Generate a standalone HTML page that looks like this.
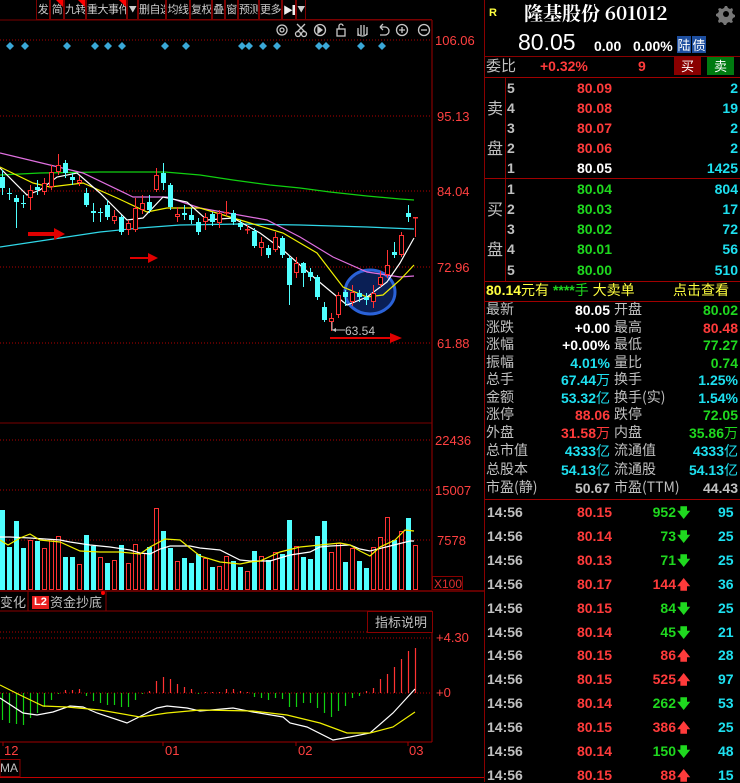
<!DOCTYPE html>
<html><head><meta charset="utf-8">
<style>
*{margin:0;padding:0;box-sizing:border-box}
body{width:740px;height:782px;background:#000;overflow:hidden;position:relative;font-family:"Liberation Sans","Noto Sans CJK SC",sans-serif;}
.a{position:absolute;white-space:nowrap;line-height:1}
.tb{position:absolute;top:0;height:20px;border:1px solid #7a0000;border-top:none;color:#ccc;font-size:11px;line-height:19px;text-align:center;font-family:"Noto Sans CJK SC",sans-serif;white-space:nowrap;overflow:hidden;letter-spacing:-0.5px}
.tri{position:absolute;top:0;right:0;width:0;height:0;border-top:7px solid #f00;border-left:7px solid transparent}
.cn{font-family:"Noto Sans CJK SC",sans-serif;color:#c0c0c0;font-size:14px}
.n{font-weight:bold;font-size:14px;font-family:"Liberation Sans",sans-serif}
.r{color:#ff3b3b}.g{color:#1fd81f}.c{color:#1ee0f0}.w{color:#fff}.y{color:#ffff40}.gy{color:#c0c0c0}
.hl{position:absolute;left:485px;width:255px;height:1px;background:#8a0000}
</style></head><body>
<svg id="ch" width="740" height="782" style="position:absolute;left:0;top:0">
<line x1="432" y1="20" x2="432" y2="590" stroke="#a00000"/>
<line x1="484.5" y1="0" x2="484.5" y2="782" stroke="#8a0000"/>
<line x1="0" y1="20" x2="432" y2="20" stroke="#7a0000"/>
<g stroke="#b00000" stroke-dasharray="1,2">
<line x1="0" y1="40" x2="432" y2="40"/><line x1="0" y1="116" x2="432" y2="116"/><line x1="0" y1="191" x2="432" y2="191"/><line x1="0" y1="267" x2="432" y2="267"/><line x1="0" y1="343" x2="432" y2="343"/>
<line x1="0" y1="440" x2="432" y2="440"/><line x1="0" y1="490" x2="432" y2="490"/><line x1="0" y1="540" x2="432" y2="540"/>
<line x1="0" y1="632" x2="432" y2="632"/><line x1="0" y1="638" x2="432" y2="638"/><line x1="0" y1="693" x2="432" y2="693"/>
</g>
<line x1="0" y1="423" x2="432" y2="423" stroke="#7a0000"/>
<g fill="#ff4040" font-size="13" font-family="Liberation Sans">
<text x="435" y="45">106.06</text><text x="437" y="121">95.13</text><text x="437" y="196">84.04</text><text x="437" y="272">72.96</text><text x="437" y="348">61.88</text>
<text x="435" y="445">22436</text><text x="435" y="495">15007</text><text x="437" y="545">7578</text>
<text x="436" y="642">+4.30</text><text x="436" y="697">+0</text>
<text x="4" y="755">12</text><text x="165" y="755">01</text><text x="298" y="755">02</text><text x="409" y="755">03</text>
</g>
<rect x="432.5" y="576.5" width="30" height="13" fill="none" stroke="#8a0000"/>
<text x="434" y="588" fill="#e03030" font-size="12" font-family="Liberation Sans">X100</text>
<ellipse cx="370" cy="292" rx="25" ry="22" fill="#0a1f55" stroke="#2a62d8" stroke-width="3"/>
<g id="ma"></g>
<g id="cd"></g>
<g id="vb"></g>
<g id="mc"></g>
<g fill="#e00000" stroke="none">
<path d="M28 232h26v-4l11 6-11 6v-4h-26z"/>
<path d="M130 257h18v-4l10 5-10 5v-4h-18z"/>
<path d="M330 337h60v-4l12 5-12 5v-4h-60z"/>
</g>
<line x1="332" y1="330" x2="345" y2="330" stroke="#c0c0c0"/>
<path d="M332 330l4-2v4z" fill="#c0c0c0"/>
<line x1="332" y1="322" x2="332" y2="330" stroke="#c0c0c0"/>
<text x="345" y="335" fill="#c0c0c0" font-size="12" font-family="Liberation Sans">63.54</text>
<line x1="0" y1="591" x2="484" y2="591" stroke="#c00000"/>
<line x1="0" y1="611" x2="432" y2="611" stroke="#8a0000"/>
<line x1="28" y1="591" x2="28" y2="611" stroke="#8a0000"/>
<line x1="106" y1="591" x2="106" y2="611" stroke="#8a0000"/>
<line x1="432" y1="611" x2="432" y2="742" stroke="#a00000"/>
<line x1="0" y1="742" x2="432" y2="742" stroke="#a00000"/>
<g stroke="#a00000"><line x1="3" y1="742" x2="3" y2="746"/><line x1="163" y1="742" x2="163" y2="746"/><line x1="296" y1="742" x2="296" y2="746"/><line x1="408" y1="742" x2="408" y2="746"/></g>
<rect x="367.5" y="611.5" width="65" height="21" fill="#000" stroke="#8a0000"/>
<rect x="0" y="759.5" width="20" height="17" fill="none" stroke="#8a0000"/>
<line x1="0" y1="777.5" x2="484" y2="777.5" stroke="#c00000"/>
<g fill="#3aa8d8" id="dm"></g>
<g fill="none" stroke="#c8c8c8" stroke-width="1.3">
<circle cx="282" cy="30" r="5"/><circle cx="282" cy="30" r="2"/>
<circle cx="298" cy="34" r="2.5"/><circle cx="304" cy="34" r="2.5"/><path d="M297 24l8 8M305 24l-8 8"/>
<circle cx="320" cy="30" r="5.5"/><path d="M318 27v6l4-3z" fill="#c8c8c8"/>
<rect x="337" y="29" width="8" height="7"/><path d="M339 29v-3a2 2 0 0 1 4 0"/>
<path d="M358 36v-8M361 35v-10M364 35v-10M367 35v-8M358 33c0 4 9 4 9 0"/>
<path d="M380 27h5a4 4 0 0 1 0 8h-5M380 27l3-3M380 27l3 3"/>
<circle cx="402" cy="30" r="5.5"/><path d="M399 30h6M402 27v6"/>
<circle cx="424" cy="30" r="5.5"/><path d="M421 30h6"/>
</g>
<path d="M726 6l2 0 1 2 2 1 2-1 1 2-1 2 1 2 2 1v2l-2 1-1 2 1 2-2 1-2-1-2 1-1 2h-2l-1-2-2-1-2 1-1-2 1-2-1-2-2-1v-2l2-1 1-2-1-2 2-1 2 1 2-1z" fill="#777" transform="translate(-1,0)"/>
<circle cx="726" cy="14" r="3" fill="#000"/>
</svg>

<div class="tb" style="left:36px;width:14px">发</div>
<div class="tb" style="left:50px;width:14px">简<div class="tri"></div></div>
<div class="tb" style="left:64px;width:22px">九转<div class="tri"></div></div>
<div class="tb" style="left:86px;width:41px">重大事件<div class="tri"></div></div>
<div class="tb" style="left:127px;width:11px;font-size:8px">▼</div>
<div class="tb" style="left:138px;width:28px">删自选</div>
<div class="tb" style="left:166px;width:24px">均线</div>
<div class="tb" style="left:190px;width:22px">复权</div>
<div class="tb" style="left:212px;width:13px">叠</div>
<div class="tb" style="left:225px;width:13px">窗</div>
<div class="tb" style="left:238px;width:21px">预测</div>
<div class="tb" style="left:259px;width:23px">更多</div>
<div class="tb" style="left:282px;width:14px;color:#eee;font-size:10px">▶▌</div>
<div class="tb" style="left:296px;width:10px;font-size:8px">▼</div>
<div class="tb" style="left:306px;width:126px;border:none;border-bottom:1px solid #7a0000"></div>

<div class="a cn" style="left:0;top:595px;font-size:13px">变化</div>
<div class="a" style="left:32px;top:596px;background:#e82020;color:#fff;font-size:11px;padding:1px 2px;font-weight:bold">L2</div>
<div class="a cn" style="left:50px;top:595px;font-size:13px">资金抄底</div>
<div class="a" style="left:101px;top:591px;width:4px;height:4px;border-radius:2px;background:#f00"></div>
<div class="a cn" style="left:375px;top:615px;font-size:13px">指标说明</div>
<div class="a" style="left:0;top:762px;color:#c0c0c0;font-size:12px">MA</div>

<div class="a" style="left:489px;top:8px;color:#ffff40;font-size:11px;font-weight:bold">R</div>
<div class="a" style="left:524px;top:3px;color:#fff;font-size:19px;font-weight:bold;font-family:'Noto Serif CJK SC','Liberation Serif',serif">隆基股份 601012</div>
<div class="a" style="left:518px;top:31px;color:#fff;font-size:23px;font-family:'Liberation Sans'">80.05</div>
<div class="a n w" style="left:594px;top:39px">0.00</div>
<div class="a n w" style="left:633px;top:39px">0.00%</div>
<div class="a" style="left:677px;top:36px;width:14px;height:17px;background:#1e4fa0;color:#fff;font-size:13px;text-align:center;line-height:17px;font-family:'Noto Sans CJK SC'">陆</div>
<div class="a" style="left:692px;top:36px;width:14px;height:17px;background:#1e4fa0;color:#fff;font-size:13px;text-align:center;line-height:17px;font-family:'Noto Sans CJK SC'">债</div>
<div class="hl" style="top:56px"></div>
<div class="a cn" style="left:486px;top:58px;font-size:15px">委比</div>
<div class="a n r" style="left:540px;top:59px">+0.32%</div>
<div class="a n r" style="left:638px;top:59px">9</div>
<div class="a" style="left:674px;top:57px;width:27px;height:18px;background:#8a0000;color:#fff;font-size:13px;text-align:center;line-height:18px;font-family:'Noto Sans CJK SC'">买</div>
<div class="a" style="left:707px;top:57px;width:27px;height:18px;background:#007a10;color:#fff;font-size:13px;text-align:center;line-height:18px;font-family:'Noto Sans CJK SC'">卖</div>
<div class="hl" style="top:77px;background:#a00000"></div>
<div class="a" style="left:505px;top:78px;width:1px;height:203px;background:#8a0000"></div>
<div class="hl" style="top:178px;background:#a00000"></div>
<div class="hl" style="top:281px;background:#a00000"></div>
<div class="a cn" style="left:487px;top:99px;font-size:16px">卖</div>
<div class="a cn" style="left:487px;top:139px;font-size:16px">盘</div>
<div class="a cn" style="left:487px;top:200px;font-size:16px">买</div>
<div class="a cn" style="left:487px;top:240px;font-size:16px">盘</div>
<div class="a" style="left:486px;top:283px;font-size:14px;color:#ffff40"><b>80.14</b><span style="font-family:'Noto Sans CJK SC'">元有</span> <b class="g">****</b><span class="g" style="font-family:'Noto Sans CJK SC'">手</span> <span style="font-family:'Noto Sans CJK SC'">大卖单</span></div>
<div class="a" style="left:673px;top:283px;font-size:14px;color:#ffff40;font-family:'Noto Sans CJK SC'">点击查看</div>
<div class="hl" style="top:301px;background:#a00000"></div>
<div class="hl" style="top:499px;background:#a00000"></div>

<script>
var NS="http://www.w3.org/2000/svg";
function el(p,t,a){var e=document.createElementNS(NS,t);for(var k in a)e.setAttribute(k,a[k]);p.appendChild(e);return e}
function pl(g,pts,col){el(g,"polyline",{points:pts,fill:"none",stroke:col,"stroke-width":1.2})}
var ma=document.getElementById("ma");
pl(ma,"0,175 40,173 100,172 165,172 200,175 233,180 270,185 300,188 330,192 367,196 400,199 414,200","#10d010");
pl(ma,"0,247 60,238 100,232 140,228 180,225 240,224 300,225 367,227 414,229","#30d8e8");
pl(ma,"0,153 50,165 83,173 133,197 167,197 200,208 267,220 300,237 333,257 367,272 400,277 414,276","#e070e0");
pl(ma,"0,167 33,183 50,187 83,183 117,198 147,212 167,208 200,208 250,223 283,233 317,253 343,287 367,297 383,295 400,280 414,265","#f0f000");
pl(ma,"0,168 27,195 40,190 57,177 77,173 100,193 127,220 143,218 163,197 187,202 207,220 233,218 260,233 283,250 317,280 347,305 367,297 387,282 400,263 414,238","#fff");
var C=[[177,188,0,170,195],[193,194,0,188,200],[198,202,0,195,228],[203,204,0,195,208],[190,198,1,185,210],[187,190,0,180,195],[183,192,1,178,195],[172,187,1,165,190],[165,172,1,154,175],[163,173,0,160,178],[177,180,0,173,185],[180,183,1,176,186],[193,205,0,188,207],[211,213,0,203,222],[212,213,0,208,222],[205,217,0,200,220],[216,221,1,210,224],[217,232,0,215,235],[223,230,1,220,235],[208,230,1,198,232],[203,210,1,195,214],[202,210,0,195,213],[175,190,1,168,192],[173,183,0,163,190],[185,207,0,183,210],[214,217,1,207,222],[213,215,0,205,220],[215,220,0,208,224],[222,232,0,218,235],[217,222,1,213,230],[214,222,0,212,226],[213,223,1,210,228],[212,213,1,201,216],[213,222,0,210,225],[223,227,0,220,230],[229,230,1,225,234],[231,246,0,228,248],[242,248,1,237,256],[248,255,0,245,258],[237,250,1,232,252],[238,255,0,236,258],[258,285,0,255,305],[263,273,1,257,278],[263,273,0,262,287],[272,277,0,268,281],[277,297,0,275,300],[307,320,0,302,322],[318,322,1,313,331],[295,315,1,292,318],[292,297,0,290,306],[292,302,1,285,306],[293,297,0,290,302],[297,300,0,293,305],[293,302,1,285,308],[277,285,1,271,287],[265,275,1,250,278],[252,255,0,242,258],[235,255,1,232,257],[213,217,0,205,222],[217,218,1,217,237]];
var cd=document.getElementById("cd");
C.forEach(function(c,i){var x=7*i,cx=x+2.5,col=c[2]?"#ff3232":"#50ffff";
el(cd,"line",{x1:cx,y1:c[3],x2:cx,y2:c[4],stroke:col});
if(c[2])el(cd,"rect",{x:x+.5,y:c[0]+.5,width:4,height:Math.max(c[1]-c[0]-1,0.5),fill:"#000",stroke:col});
else el(cd,"rect",{x:x,y:c[0],width:5,height:Math.max(c[1]-c[0],1),fill:col});});
var V=[[510,0],[547,0],[521,0],[548,0],[540,1],[541,0],[548,1],[539,1],[536,1],[557,0],[557,0],[564,1],[535,0],[546,0],[557,1],[563,0],[560,1],[545,0],[563,1],[544,1],[553,1],[547,0],[508,1],[531,0],[548,0],[561,1],[558,0],[563,0],[554,0],[558,1],[567,0],[566,1],[556,1],[561,0],[567,0],[571,1],[551,0],[556,1],[560,0],[552,1],[554,0],[520,0],[546,1],[557,0],[559,0],[536,0],[521,0],[552,1],[543,1],[562,0],[548,1],[561,0],[568,0],[547,1],[537,1],[517,1],[540,0],[531,1],[518,0],[545,1]];
var vb=document.getElementById("vb");
V.forEach(function(v,i){var x=7*i;if(v[1])el(vb,"rect",{x:x+.5,y:v[0]+.5,width:4,height:589-v[0],fill:"none",stroke:"#ff3232"});else el(vb,"rect",{x:x,y:v[0],width:5,height:590-v[0],fill:"#50ffff"});});
pl(vb,"0,537 10,537 30,538 60,540 70,542 90,545 110,547 130,550 140,553 150,554 160,549 170,546 190,546 200,548 220,550 240,560 250,561 270,561 290,555 310,552 320,547 330,546 350,545 360,549 370,551 390,546 410,541 414,541","#fff");
pl(vb,"0,540 8,545 20,538 30,534 40,540 60,542 80,551 100,552 120,552 140,554 150,547 165,539 180,540 190,548 200,556 220,562 240,564 250,562 260,561 280,552 300,547 320,545 340,543 350,545 360,551 370,556 380,547 395,540 405,530 414,531","#f0f000");
var M=[-27,-30,-31,-32,-25,-20,-14,-7,-1,3,3,4,-3,-8,-10,-12,-12,-14,-14,-7,-1,2,12,16,14,9,6,4,-1,1,1,1,4,4,2,1,-4,-5,-7,-5,-6,-14,-14,-10,-10,-15,-20,-24,-18,-13,-5,-3,2,5,14,19,26,34,42,45];
var mc=document.getElementById("mc");
M.forEach(function(m,i){var x=7*i+2.5;el(mc,"line",{x1:x,y1:693,x2:x,y2:693-m,stroke:m<0?"#10d010":"#ff3232","stroke-width":1.2});});
pl(mc,"0,698 23,713 37,715 53,712 70,706 83,707 97,713 127,723 157,708 167,706 187,708 200,711 233,708 253,712 283,717 290,723 307,727 333,740 350,737 370,733 393,713 415,689","#fff");
pl(mc,"0,685 20,695 43,706 67,707 100,710 140,717 167,713 200,710 253,711 287,715 320,723 347,733 370,733 393,727 415,712","#f0f000");
var dm=document.getElementById("dm");
[10,25,67,95,108,122,165,186,242,249,263,277,319,326,361,382].forEach(function(x){el(dm,"path",{d:"M"+x+" 42l4 4-4 4-4-4z"})});
function T(h){document.body.insertAdjacentHTML("beforeend",h)}
function R(x,y,cls,txt){T('<div class="a '+cls+'" style="right:'+(740-x)+'px;top:'+y+'px">'+txt+'</div>')}
function L(x,y,cls,txt){T('<div class="a '+cls+'" style="left:'+x+'px;top:'+y+'px">'+txt+'</div>')}
var ob=[["5","80.09","r","2"],["4","80.08","r","19"],["3","80.07","r","2"],["2","80.06","r","2"],["1","80.05","w","1425"],["1","80.04","g","804"],["2","80.03","g","17"],["3","80.02","g","72"],["4","80.01","g","56"],["5","80.00","g","510"]];
var oy=[81,101,121,141,161,182,202,222,242,263];
ob.forEach(function(o,i){L(507,oy[i],"n gy",o[0]);R(612,oy[i],"n "+o[2],o[1]);R(738,oy[i],"n c",o[3]);});
var st=[["最新","80.05","w","开盘","80.02","g"],["涨跌","+0.00","w","最高","80.48","r"],["涨幅","+0.00%","w","最低","77.27","g"],["振幅","4.01%","c","量比","0.74","g"],["总手","67.44万","c","换手","1.25%","c"],["金额","53.32亿","c","换手(实)","1.54%","c"],["涨停","88.06","r","跌停","72.05","g"],["外盘","31.58万","r","内盘","35.86万","g"],["总市值","4333亿","c","流通值","4333亿","c"],["总股本","54.13亿","c","流通股","54.13亿","c"],["市盈(静)","50.67","gy","市盈(TTM)","44.43","gy"]];
var sy=[303,321,338,356,373,391,408,426,444,463,481];
function cj(s){return s.replace(/([万亿])/,'<span style="font-family:Noto Sans CJK SC;font-weight:normal">$1</span>')}
st.forEach(function(s,i){var y=sy[i];L(486,y-1,"cn",s[0]);R(610,y,"n "+s[2],cj(s[1]));L(614,y-1,"cn",s[3]);R(738,y,"n "+s[5],cj(s[4]));});
var tk=[["80.15","952",0,"95"],["80.14","73",0,"25"],["80.13","71",0,"25"],["80.17","144",1,"36"],["80.15","84",0,"25"],["80.14","45",0,"21"],["80.15","86",1,"28"],["80.15","525",1,"97"],["80.14","262",0,"53"],["80.15","386",1,"25"],["80.14","150",0,"48"],["80.15","88",1,"15"]];
tk.forEach(function(t,i){var y=505+i*23.9;L(487,y,"n gy","14:56");R(612,y,"n r",t[0]);R(676,y,"n "+(t[2]?"r":"g"),t[1]);
T('<div class="a" style="left:677px;top:'+(y+1)+'px;font-size:13px;font-weight:bold;color:'+(t[2]?'#ff3b3b':'#1fd81f')+'">'+(t[2]?'🡅':'🡇')+'</div>');
L(718,y,"n c",t[3]);});
</script>
</body></html>
